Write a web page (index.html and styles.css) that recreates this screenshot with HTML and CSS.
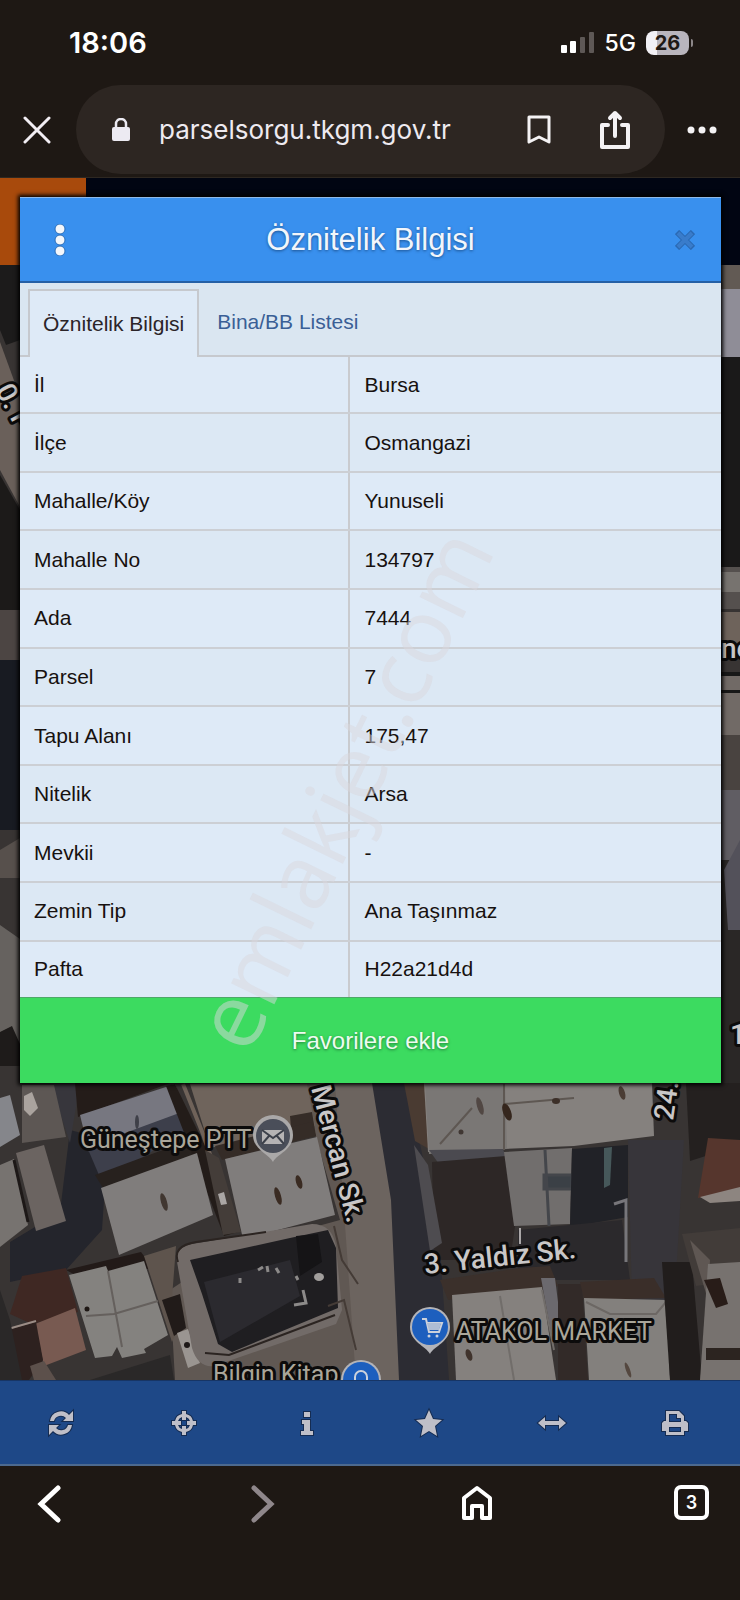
FILE: index.html
```html
<!DOCTYPE html>
<html lang="tr">
<head>
    <meta charset="UTF-8">
    <meta name="viewport" content="width=device-width, initial-scale=1.0">
    <title>Parsel Sorgu</title>
    <link rel="stylesheet" href="styles.css">
</head>
<body>
    <div class="status-bar">
        <span class="clock">18:06</span>
        <div class="status-icons">
            <svg class="signal" width="34" height="22" viewBox="0 0 34 22">
                <rect x="0" y="13" width="6" height="8" rx="1" fill="#fff"/>
                <rect x="9" y="9" width="6" height="12" rx="1" fill="#fff"/>
                <rect x="19" y="5" width="5" height="16" rx="1" fill="#5e5856"/>
                <rect x="28" y="0" width="5" height="21" rx="1" fill="#5e5856"/>
            </svg>
            <span class="network">5G</span>
            <span class="battery">26</span>
        </div>
    </div>

    <header class="browser-bar">
        <button class="icon-btn" type="button" aria-label="Kapat">
            <svg width="28" height="28" viewBox="0 0 28 28" fill="none" stroke="#f2eef4" stroke-width="3" stroke-linecap="round"><path d="M2 2l24 24M26 2L2 26"/></svg>
        </button>
        <div class="address">
            <svg width="20" height="24" viewBox="0 0 20 24"><rect x="1" y="9" width="18" height="14" rx="2" fill="#eceaf2"/><path d="M5 10V6a5 5 0 0 1 10 0v4" fill="none" stroke="#eceaf2" stroke-width="2.5"/></svg>
            <input class="address-input" type="text" value="parselsorgu.tkgm.gov.tr" aria-label="Adres">
            <button class="icon-btn" type="button" aria-label="Yer işareti">
                <svg width="24" height="30" viewBox="0 0 24 30" fill="none" stroke="#f4f2f4" stroke-width="3"><path d="M2 2h20v25l-10-5-10 5z" stroke-linejoin="round"/></svg>
            </button>
            <button class="icon-btn share" type="button" aria-label="Paylaş">
                <svg width="32" height="42" viewBox="0 0 32 42" fill="none" stroke="#f4f2f4" stroke-width="4" stroke-linecap="round" stroke-linejoin="round"><path d="M9 16H3v22h26V16h-6M16 27V4M11 9l5-5 5 5"/></svg>
            </button>
        </div>
        <button class="icon-btn more" type="button" aria-label="Menü">
            <svg width="30" height="8" viewBox="0 0 30 8" fill="#f4f2f4"><circle cx="4" cy="4" r="3.5"/><circle cx="15" cy="4" r="3.5"/><circle cx="26" cy="4" r="3.5"/></svg>
        </button>
    </header>

    <main class="map">
        <svg class="map-canvas" viewBox="0 178 740 1202" preserveAspectRatio="xMidYMin slice" aria-hidden="true">
            <rect x="0" y="178" width="740" height="1202" fill="#383433"/>

            <!-- left edge -->
            <g>
                <path d="M0 265h20v75L6 345 0 330z" fill="#1c1b1b"/>
                <path d="M0 342l20 55v110L0 470z" fill="#6a605a"/>
                <path d="M0 475l20 35v115H0z" fill="#1c1a19"/>
                <path d="M0 610h20v50H0z" fill="#4c4543"/>
                <path d="M0 660h20v170H0z" fill="#181b22"/>
                <path d="M0 850l20-12v40H0z" fill="#57504c"/>
                <path d="M0 925l20 14v120l-20-20z" fill="#66625f"/>
                <path d="M0 1032l12-6 8 18v22H0z" fill="#1e1b1a"/>
            </g>

            <!-- right edge -->
            <g>
                <path d="M720 265h20v24h-20z" fill="#625a54"/>
                <path d="M720 289h20v68h-20z" fill="#8f8d97"/>
                <path d="M720 357h20v210h-20z" fill="#1a1919"/>
                <path d="M720 567h20v42h-20z" fill="#55504e"/>
                <path d="M720 572h20v20h-20z" fill="#77736f"/>
                <path d="M720 612h20v40h-20z" fill="#6e635b"/>
                <path d="M720 675h20v60h-20z" fill="#716a66"/>
                <path d="M720 672h20v4h-20zM720 690h20v3h-20z" fill="#181818"/>
                <path d="M720 735h20v90h-20z" fill="#494340"/>
                <path d="M720 790h20v70h-20z" fill="#605d63"/>
                <path d="M720 860h20v225h-20z" fill="#2a2726"/>
                <path d="M724 870l16-30v90h-12z" fill="#53515a"/>
            </g>

            <!-- streets -->
            <path d="M300 1083h80l16 100 10 197H175l-5-90 60-40 110-30z" fill="#605853"/>
            <path d="M335 1083h45l16 110 10 187h-50z" fill="#6c645f"/>
            <path d="M372 1083h35l32 150 10 147h-50l-8-180z" fill="#2c2c33"/>
            <path d="M628 1140h56l-14 240h-36z" fill="#37353a"/>
            <path d="M70 1130l38 10-6 90-36 40-56 12v-40l50-30z" fill="#24252c"/>
            <path d="M50 1083h30l-10 60z" fill="#37363c"/>

            <!-- houses on the left -->
            <path d="M22 1085h32l12 52-44 6z" fill="#5d5754"/>
            <path d="M0 1098l10-3 10 40-20 12z" fill="#85868b"/>
            <path d="M24 1096l8-4 6 16-8 8-6-6z" fill="#aaa39e"/>
            <path d="M0 1165l14-6 14 66-28 22z" fill="#777370"/>
            <path d="M16 1153l28-8 22 76-30 10z" fill="#6b6461"/>
            <path d="M14 1160l14 62" stroke="#1d1817" stroke-width="3"/>
            <path d="M75 1083h95l-92 34z" fill="#241c19"/>
            <path d="M80 1115l95-31 12 32-98 36z" fill="#777780"/>
            <path d="M87 1147l95-35 8 16-88 54z" fill="#3d3f4b"/>
            <path d="M95 1175l100-37 2 16-94 34z" fill="#27211e"/>
            <path d="M175 1084l35 72 28 76-14 4-58-150z" fill="#231c19"/>
            <path d="M183 1084l20 50 12 35" stroke="#6f6259" stroke-width="4" fill="none"/>
            <path d="M190 1084h117l8 42-105 22z" fill="#6f645c"/>
            <path d="M290 1116l22-4 4 24-24 4z" fill="#352c27"/>
            <path d="M215 1146l96-24 5 14-94 24z" fill="#352c27"/>
            <path d="M101 1188l96-35 16 62-94 40z" fill="#807d7c"/>
            <path d="M225 1159l92-22 18 78-92 24z" fill="#807d7c"/>
            <path d="M205 1150l14 8 22 74-18 3z" fill="#443d39"/>
            <path d="M218 1194l6-2 3 12-6 1z" fill="#aaa6a4"/>
            <ellipse cx="164" cy="1202" rx="3" ry="9" transform="rotate(-16 164 1202)" fill="#413731"/>
            <ellipse cx="278" cy="1196" rx="3" ry="9" transform="rotate(-16 278 1196)" fill="#3a2b22"/>
            <ellipse cx="299" cy="1182" rx="3" ry="7" transform="rotate(-16 299 1182)" fill="#3a2b22"/>
            <ellipse cx="137" cy="1122" rx="2" ry="7" fill="#3f4048"/>
            <path d="M66 1270l75-18 12 16-68 12z" fill="#221a18"/>
            <path d="M22 1276l44-8 12 44-46 12-22-10z" fill="#3f2823"/>
            <path d="M35 1324l40-16 11 42-42 16z" fill="#785a51"/>
            <path d="M8 1330l28-8 7 38-14 20H8z" fill="#2d211f"/>
            <path d="M8 1329l28-8" stroke="#9b8d86" stroke-width="2"/>
            <path d="M69 1275l37-9 2 5 36-10 24 74-24 14 2 4-24 5-5-11-5 9-17 2z" fill="#84827f"/>
            <path d="M86 1316l28-2 44-13M108 1271l14 76" stroke="#65605d" stroke-width="2" fill="none"/>
            <circle cx="87" cy="1309" r="2.500" fill="#1e1714"/>
            <path d="M144 1256l32-10-4 52 10 24-10 20z" fill="#5e544d"/>
            <path d="M162 1300l18-6 6 34-12 8z" fill="#211b19"/>
            <path d="M177 1333l11-4 12 34-12 5z" fill="#9a9591"/>
            <circle cx="187" cy="1345" r="3" fill="#1d1817"/>
            <path d="M0 1380v-90l10 30 12 60zM90 1380l80-25 4 25z" fill="#2a2828"/>
            <path d="M30 1366l14-5 12 19H34z" fill="#5c504b"/>

            <!-- fenced plot -->
            <path d="M176 1256q4-10 16-12l120-20q20 0 24 22l6 64-6 14-122 42q-16 2-22-18z" fill="#726b68"/>
            <path d="M190 1260l100-22 38-8 8 18 2 60-106 44-14-8-16-50z" fill="#1f1e21"/>
            <path d="M204 1282l86-22 10 36-80 46z" fill="#2b2a2f"/>
            <path d="M296 1236l22-2 4 28-22 14z" fill="#151416"/>
            <path d="M178 1262q-6-16 18-20l70-10M205 1353l24 2 106-40" stroke="#2b2421" stroke-width="2" fill="none"/>
            <path d="M258 1270l5-3M267 1266l1 6M276 1268l3 5M240 1278v5M296 1276l2 4M303 1290l3 13-12 2" stroke="#8c8a89" stroke-width="3" fill="none"/>
            <ellipse cx="319" cy="1277" rx="5" ry="4" fill="#a19e9c"/>
            <path d="M334 1226l8 34 16 24M328 1306l16-6 12 50" stroke="#443b36" stroke-width="2" fill="none"/>

            <!-- houses on the right -->
            <path d="M404 1083h21l4 66-14-8z" fill="#4a3b32"/>
            <path d="M424 1083h228l2 53-80 10-146 6z" fill="#85817e"/>
            <path d="M425 1083h80l2 66-78 5z" fill="#7a7775"/>
            <path d="M440 1144l32-36M504 1084v66M504 1104l70-6" stroke="#5e5752" stroke-width="2" fill="none"/>
            <path d="M429 1150l74-1 6 18-70-3z" fill="#4b4a50"/>
            <path d="M432 1162l74-6 10 64-6 40h-76z" fill="#2d2726"/>
            <path d="M414 1145l14 20 14 78-12 8z" fill="#4e4c50"/>
            <path d="M504 1152l68-4-2 76-56 2z" fill="#716e6d"/>
            <path d="M545 1150l4 76M544 1175h28v14h-28z" stroke="#44464b" stroke-width="3" fill="#3b4046"/>
            <path d="M572 1149l56-4v72l-58 10z" fill="#212227"/>
            <path d="M604 1148l8-1-2 38-6 3z" fill="#46585a"/>
            <path d="M518 1230l104-10 8 60H518z" fill="#2b292c"/>
            <path d="M614 1204l12-4v62" stroke="#77767a" stroke-width="3" fill="none"/>
            <path d="M520 1228v16" stroke="#aaa7a8" stroke-width="2" fill="none"/>
            <ellipse cx="507" cy="1112" rx="4" ry="9" transform="rotate(-20 507 1112)" fill="#35261d"/>
            <ellipse cx="480" cy="1106" rx="3" ry="9" transform="rotate(-16 480 1106)" fill="#514743"/>
            <ellipse cx="556" cy="1101" rx="4" ry="3" fill="#3c2f28"/>
            <ellipse cx="622" cy="1093" rx="3" ry="7" transform="rotate(-16 622 1093)" fill="#4a3c34"/>
            <circle cx="461" cy="1132" r="2.500" fill="#403733"/>
            <path d="M440 1280l80-12 30-2 8 20-110 14z" fill="#3b302b"/>
            <path d="M452 1295l90-8 14 93H456z" fill="#85817e"/>
            <path d="M541 1278h14l5 40-8 20z" fill="#6b696e"/>
            <path d="M500 1296l14 84M542 1290l12 60" stroke="#716d6a" stroke-width="2"/>
            <ellipse cx="469" cy="1355" rx="3" ry="6" transform="rotate(-20 469 1355)" fill="#40332c"/>
            <path d="M558 1284h24l6 96h-30z" fill="#322a28"/>
            <path d="M580 1282l74-4 12 20-82 2z" fill="#3a2e29"/>
            <path d="M584 1298l83 2 3 80h-81z" fill="#83807d"/>
            <path d="M586 1302l24 12 46 0 10-12" stroke="#6c6764" stroke-width="2" fill="none"/>
            <ellipse cx="628" cy="1370" rx="2" ry="8" transform="rotate(-20 628 1370)" fill="#54473f"/>
            <path d="M686 1083h54v62l-50 16z" fill="#24201f"/>
            <path d="M708 1138l32 2v50l-42 8z" fill="#56362d"/>
            <path d="M700 1197l40-10v14l-30 2z" fill="#8d8580"/>
            <path d="M662 1262h30l10 118h-32z" fill="#211d1c"/>
            <path d="M682 1234l58-6v52l-44 6z" fill="#423c39"/>
            <path d="M690 1240l20 20-2 40z" fill="#5f5753"/>
            <path d="M708 1264l32-2v118h-40z" fill="#77726f"/>
            <path d="M704 1280l16-2 8 26-12 4z" fill="#281c18"/>
            <path d="M706 1348h34v12h-34z" fill="#2c2420"/>

            <!-- place names -->
            <g class="map-label">
                <text x="80" y="1148" class="place">Güneştepe PTT</text>
                <text x="456" y="1340" class="place">ATAKOL MARKET</text>
                <text x="213" y="1383" class="place">Bilgin Kitap</text>
                <text transform="translate(311 1088) rotate(75)">Mercan Sk.</text>
                <text transform="translate(425 1274) rotate(-6)">3. Yaldız Sk.</text>
                <text transform="translate(673 1121) rotate(-82)">24.</text>
                <text transform="translate(-5 390) rotate(62)">0. F</text>
                <text x="721" y="658">ne</text>
                <text x="730" y="1044">1</text>
            </g>

            <!-- markers -->
            <g>
                <path d="M273 1162c-4-8-20-12-20-27a20 20 0 0 1 40 0c0 15-16 19-20 27z" fill="#aaa8a8"/>
                <circle cx="273" cy="1136" r="17" fill="#4a4e59"/>
                <path d="M262 1130h22v14h-22z" fill="#b5b3b4"/>
                <path d="M262 1130l11 8 11-8M262 1144l7-8M284 1144l-7-8" stroke="#3c404a" stroke-width="2" fill="none"/>
                <path d="M430 1354c-4-8-20-12-20-27a20 20 0 0 1 40 0c0 15-16 19-20 27z" fill="#b4b4b8"/>
                <circle cx="430" cy="1327" r="18" fill="#1d5fbe"/>
                <path d="M422 1319h4l3 13h10l3-9h-15" stroke="#ccd2dc" stroke-width="2" fill="none"/>
                <path d="M427 1323h14l-2 7h-10z" fill="#aebdd4"/>
                <circle cx="429" cy="1336" r="1.500" fill="#ccd2dc"/><circle cx="437" cy="1336" r="1.500" fill="#ccd2dc"/>
                <circle cx="361" cy="1380" r="20" fill="#b4b4b8"/>
                <circle cx="361" cy="1380" r="18" fill="#1d5fbe"/>
                <path d="M355 1380v-3a6 6 0 0 1 12 0v3" stroke="#ccd2dc" stroke-width="2" fill="none"/>
            </g>

            <!-- page header behind the dialog -->
            <rect x="0" y="178" width="740" height="87" fill="#010512"/>
            <rect x="0" y="178" width="86" height="87" fill="#a84a0c"/>
        </svg>

        <section class="dialog" aria-labelledby="dialogTitle">
            <div class="dialog-header">
                <button class="icon-btn" type="button" aria-label="Seçenekler">
                    <svg width="12" height="32" viewBox="0 0 12 32" fill="#f4f7fb" stroke="#2a6db9" stroke-width="1"><circle cx="6" cy="5" r="5"/><circle cx="6" cy="16" r="5"/><circle cx="6" cy="27" r="5"/></svg>
                </button>
                <h1 class="dialog-title" id="dialogTitle">Öznitelik Bilgisi</h1>
                <button class="icon-btn" type="button" aria-label="Pencereyi kapat">
                    <svg width="20" height="20" viewBox="0 0 20 20" fill="none"><path d="M2 2l16 16M18 2L2 18" stroke="#2a69b3" stroke-width="6"/><path d="M3 3l14 14M17 3L3 17" stroke="#397ccb" stroke-width="4"/></svg>
                </button>
            </div>
            <nav class="tabs">
                <a class="tab active" href="#oznitelik">Öznitelik Bilgisi</a>
                <a class="tab" href="#bina">Bina/BB Listesi</a>
            </nav>
            <table class="info" id="oznitelik">
                <tr><th scope="row">İl</th><td>Bursa</td></tr>
                <tr><th scope="row">İlçe</th><td>Osmangazi</td></tr>
                <tr><th scope="row">Mahalle/Köy</th><td>Yunuseli</td></tr>
                <tr><th scope="row">Mahalle No</th><td>134797</td></tr>
                <tr><th scope="row">Ada</th><td>7444</td></tr>
                <tr><th scope="row">Parsel</th><td>7</td></tr>
                <tr><th scope="row">Tapu Alanı</th><td>175,47</td></tr>
                <tr><th scope="row">Nitelik</th><td>Arsa</td></tr>
                <tr><th scope="row">Mevkii</th><td>-</td></tr>
                <tr><th scope="row">Zemin Tip</th><td>Ana Taşınmaz</td></tr>
                <tr><th scope="row">Pafta</th><td>H22a21d4d</td></tr>
            </table>
            <button class="favorite" type="button">Favorilere ekle</button>
            <span class="watermark">emlakjet.com</span>
        </section>
    </main>

    <div class="toolbar">
        <button class="icon-btn" type="button" aria-label="Yenile">
            <svg width="28" height="28" viewBox="0 0 28 28"><path d="M3 12A11 11 0 0 1 22 6l4-4v10H16l3-3a7 7 0 0 0-12 3zM25 16a11 11 0 0 1-19 6l-4 4V16h10l-3 3a7 7 0 0 0 12-3z"/></svg>
        </button>
        <button class="icon-btn" type="button" aria-label="Konum">
            <svg width="28" height="28" viewBox="0 0 28 28"><path fill-rule="evenodd" d="M12 2h4v3a9 9 0 0 1 7 7h3v4h-3a9 9 0 0 1-7 7v3h-4v-3a9 9 0 0 1-7-7H2v-4h3a9 9 0 0 1 7-7zm0 6a6 6 0 0 0-4 4h3v4H8a6 6 0 0 0 4 4v-3h4v3a6 6 0 0 0 4-4h-3v-4h3a6 6 0 0 0-4-4v3h-4z"/></svg>
        </button>
        <button class="icon-btn" type="button" aria-label="Bilgi">
            <svg width="28" height="28" viewBox="0 0 28 28"><path d="M11 3h6v5h-6zM9 11h8v11h3v4H8v-4h3v-7H9z"/></svg>
        </button>
        <button class="icon-btn" type="button" aria-label="Favoriler">
            <svg width="28" height="28" viewBox="0 0 28 28"><path d="M14 1l4 9 9 1-7 6 2 10-8-5-8 5 2-10-7-6 9-1z"/></svg>
        </button>
        <button class="icon-btn" type="button" aria-label="Mesafe ölç">
            <svg width="30" height="28" viewBox="0 0 30 28"><path d="M1 14l7-6v4h14V8l7 6-7 6v-4H8v4z"/></svg>
        </button>
        <button class="icon-btn" type="button" aria-label="Yazdır">
            <svg width="28" height="28" viewBox="0 0 28 28"><path fill-rule="evenodd" d="M5 2h13l5 5v5h2l2 2v8h-4v4H5v-4H1v-8l2-2h2zm3 3v8h12V9h-4V5zm0 13v5h12v-5z"/></svg>
        </button>
    </div>

    <nav class="bottom-nav">
        <button class="icon-btn" type="button" aria-label="Geri">
            <svg width="24" height="38" viewBox="0 0 24 38" fill="none" stroke="#fff" stroke-width="5" stroke-linecap="round"><path d="M21 3L4 19l17 16"/></svg>
        </button>
        <button class="icon-btn" type="button" aria-label="İleri">
            <svg width="24" height="38" viewBox="0 0 24 38" fill="none" stroke="#8f878b" stroke-width="5" stroke-linecap="round"><path d="M3 3l17 16L3 35"/></svg>
        </button>
        <button class="icon-btn" type="button" aria-label="Ana sayfa">
            <svg width="32" height="36" viewBox="0 0 32 36" fill="none" stroke="#fff" stroke-width="4" stroke-linejoin="round"><path d="M3 13L16 3l13 10v20h-8V21H11v12H3z"/></svg>
        </button>
        <button class="tab-count" type="button" aria-label="Sekmeler">3</button>
    </nav>
</body>
</html>
```
FILE: styles.css
```css
* {
    box-sizing: border-box;
}

body {
    margin: 0;
    min-height: 100vh;
    display: flex;
    flex-direction: column;
    background-color: #1e1814;
    font-family: "Liberation Sans", Arial, sans-serif;
}

button {
    font-family: inherit;
    border: none;
    cursor: pointer;
}

svg {
    display: block;
}

.icon-btn {
    display: flex;
    align-items: center;
    justify-content: center;
    padding: 0;
    background: none;
}

/* Phone status bar */
.status-bar {
    display: flex;
    align-items: center;
    justify-content: space-between;
    height: 85px;
    padding: 0 51px 0 69px;
    color: #fff;
    font-family: Inter, sans-serif;
}

.clock {
    font-size: 29px;
    font-weight: 600;
}

.status-icons {
    display: flex;
    align-items: center;
    gap: 10px;
}

.network {
    font-size: 23px;
    font-weight: 500;
}

.battery {
    position: relative;
    width: 43px;
    border-radius: 8px;
    background: linear-gradient(to right, #f2f0f5 26%, #b9b5bd 26%);
    color: #1e1814;
    font-size: 20px;
    font-weight: 700;
    line-height: 24px;
    text-align: center;
}

.battery::after {
    content: "";
    position: absolute;
    right: -4px;
    top: 8px;
    width: 2px;
    height: 8px;
    border-radius: 0 2px 2px 0;
    background-color: #8c8789;
}

/* Browser address bar */
.browser-bar {
    display: flex;
    align-items: center;
    padding: 0 23px 3px;
    border-bottom: 1px solid #2e2822;
}

.address {
    flex: 1;
    display: flex;
    align-items: center;
    min-width: 0;
    height: 89px;
    margin: 0 22px 0 25px;
    padding: 0 34px 0 35px;
    border-radius: 45px;
    background-color: #2d2622;
}

.address-input {
    flex: 1;
    min-width: 0;
    padding: 0 0 0 28px;
    border: none;
    background: none;
    color: #eeeaf0;
    font-family: Inter, sans-serif;
    font-size: 26px;
}

.share {
    margin-left: 48px;
}

/* Map and dialog */
.map {
    position: relative;
    flex: 1;
    padding: 19px 19px 297px 20px;
    overflow: hidden;
}

.map-canvas {
    position: absolute;
    left: 0;
    top: 0;
    width: 100%;
    height: 100%;
}

.map-label {
    font-family: Roboto, sans-serif;
    font-size: 28px;
    font-weight: 500;
    fill: #c9c7c7;
    stroke: #0c0b0b;
    stroke-width: 6px;
    stroke-linejoin: round;
    paint-order: stroke;
}

.place {
    fill: #aaa69a;
    font-size: 25px;
    font-weight: 400;
}

.dialog {
    position: relative;
    background-color: #deeaf7;
    box-shadow: 0 0 4px 2px #000;
}

.dialog-header {
    display: flex;
    align-items: center;
    justify-content: space-between;
    height: 86px;
    padding: 0 26px 0 34px;
    background-color: #3990ee;
    border-top: 1px solid #8fb9e8;
    border-bottom: 2px solid #2560a6;
}

.dialog-title {
    margin: 0;
    color: #f2f6fb;
    font-size: 31px;
    font-weight: normal;
    text-shadow: 0 1px 3px #1b4f8c;
}

.tabs {
    display: flex;
    height: 74px;
    padding: 6px 8px 0;
    background-color: #dae6f1;
    border-bottom: 2px solid #c6c9ce;
}

.tab {
    display: flex;
    align-items: center;
    padding: 0 18px;
    color: #3a5f96;
    font-size: 21px;
    text-decoration: none;
}

.tab.active {
    height: 68px;
    padding: 0 13px;
    border: 2px solid #c6c9ce;
    border-bottom: none;
    background-color: #deeaf7;
    color: #2b2428;
}

.info {
    width: 100%;
    height: 640px;
    border-collapse: collapse;
    table-layout: fixed;
    color: #17110f;
    font-size: 21px;
}

.info th,
.info td {
    padding: 0 14px;
    border-bottom: 2px solid #cccfd4;
    font-weight: normal;
    text-align: left;
}

.info th {
    width: 47%;
    border-right: 2px solid #c9cbcf;
}

.info tr:nth-child(even) {
    background-color: #dce8f4;
}

.info tr:last-child th,
.info tr:last-child td {
    border-bottom: none;
}

.favorite {
    display: block;
    width: 100%;
    height: 86px;
    padding: 0;
    background-color: #3cdb60;
    border-top: 1px solid #4da868;
    color: #eefbf0;
    font-size: 24px;
    text-shadow: 0 1px 3px #1f7a37;
}

.watermark {
    position: absolute;
    left: 50%;
    top: 50%;
    transform: translate(-50%, -50%) translate(-30px, 148px) rotate(-64deg);
    color: rgba(218, 216, 221, 0.5);
    font-family: "Open Sans", sans-serif;
    font-size: 90px;
    pointer-events: none;
}

/* Map toolbar */
.toolbar {
    display: grid;
    grid-template-columns: repeat(6, 1fr);
    height: 86px;
    padding-right: 4px;
    background-color: #1e4887;
    border-top: 1px solid #173565;
    border-bottom: 2px solid #4c698f;
}

.toolbar svg {
    overflow: visible;
    fill: #bfbfc8;
    stroke: #152c52;
    stroke-width: 2px;
    paint-order: stroke;
}

/* Browser bottom navigation */
.bottom-nav {
    display: flex;
    align-items: flex-start;
    justify-content: space-between;
    height: 134px;
    padding: 19px 31px 0;
}

.bottom-nav .icon-btn,
.tab-count {
    width: 35px;
}

.tab-count {
    height: 35px;
    padding: 0;
    border: 4px solid #fff;
    border-radius: 7px;
    background: none;
    color: #fff;
    font-family: Inter, sans-serif;
    font-size: 18px;
    font-weight: 600;
}
```
